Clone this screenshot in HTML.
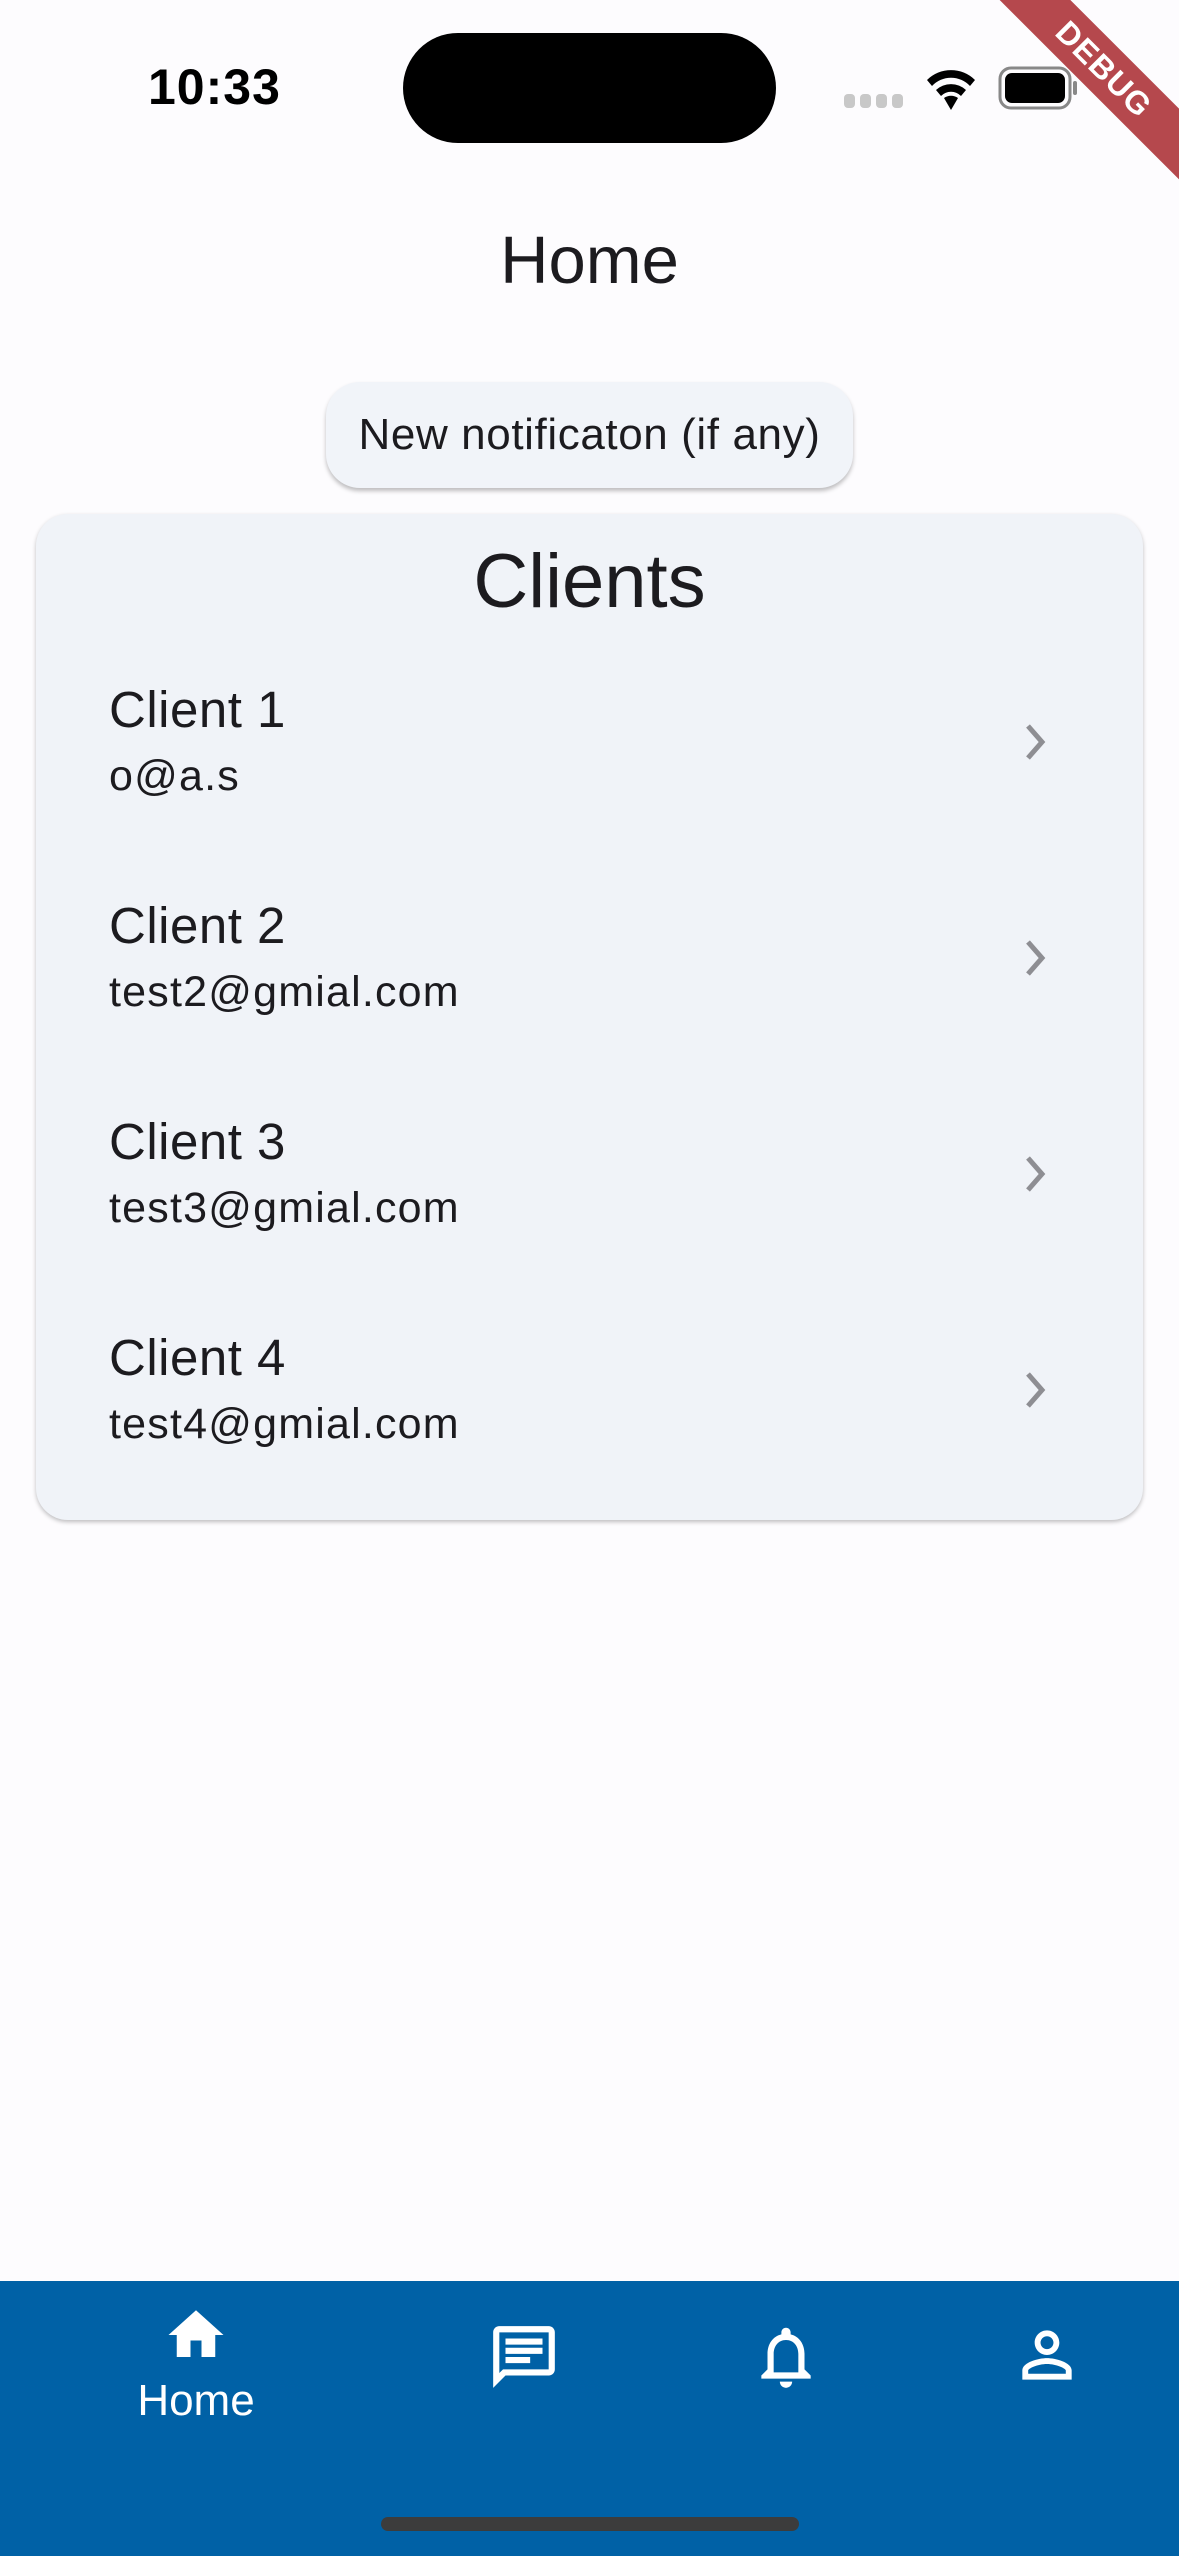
<!DOCTYPE html>
<html><head><meta charset="utf-8"><style>
html,body{margin:0;padding:0}
body{width:1179px;height:2556px;background:#fdfcfe;position:relative;overflow:hidden;font-family:"Liberation Sans",sans-serif;color:#1c1b1f}
.abs{position:absolute}
.time{left:148px;top:58px;font-size:50px;font-weight:bold;color:#000;letter-spacing:1px}
.island{left:403px;top:33px;width:373px;height:110px;background:#000;border-radius:55px}
.title{left:0;width:1179px;top:222px;text-align:center;font-size:67px}
.btn{left:326px;top:382px;width:527px;height:106px;background:#f1f4f9;border-radius:34px;box-shadow:0 3px 4px rgba(0,0,0,.25);text-align:center;line-height:106px;font-size:44px;letter-spacing:.6px}
.card{left:36px;top:514px;width:1107px;height:1006px;background:#f0f3f8;border-radius:32px;box-shadow:0 2px 4px rgba(0,0,0,.25)}
.clients{left:0;width:1179px;top:538px;text-align:center;font-size:76px}
.name{left:109px;font-size:51px;letter-spacing:.5px}
.mail{left:109px;font-size:43px;letter-spacing:1.2px}
.chev{left:1020px}
.nav{left:0;top:2281px;width:1179px;height:275px;background:#0061a6}
.ind{left:381px;top:2517px;width:418px;height:14px;border-radius:7px;background:#3c3c3c}
.debug{right:-80px;top:44px;width:310px;height:50px;background:#b5484d;transform:rotate(45deg);color:#fff;font-weight:bold;font-size:32px;text-align:center;line-height:50px;letter-spacing:1px}
</style></head><body>
<div class="abs time">10:33</div>
<div class="abs island"></div>
<svg class="abs" style="left:844px;top:94px" width="64" height="16"><g fill="#c8c8c8"><rect x="0" y="0" width="11" height="14" rx="4"/><rect x="16" y="0" width="11" height="14" rx="4"/><rect x="32" y="0" width="11" height="14" rx="4"/><rect x="48" y="0" width="11" height="14" rx="4"/></g></svg>
<svg class="abs" style="left:924px;top:66px" width="54" height="44" viewBox="0 0 54 44"><path d="M27 44 L20 32 A12 12 0 0 1 34 32 Z" fill="#000"/><path d="M12 24 A22 22 0 0 1 42 24 L37 30 A14 14 0 0 0 17 30 Z" fill="#000"/><path d="M3 14 A34 34 0 0 1 51 14 L46 20 A26 26 0 0 0 8 20 Z" fill="#000"/></svg>
<svg class="abs" style="left:998px;top:66px" width="82" height="44"><rect x="2" y="2" width="70" height="40" rx="11" fill="none" stroke="#888" stroke-width="3"/><rect x="7" y="7" width="60" height="30" rx="7" fill="#000"/><rect x="75" y="15" width="4" height="14" rx="2" fill="#888"/></svg>
<div class="abs debug">DEBUG</div>
<div class="abs title">Home</div>
<div class="abs btn">New notificaton (if any)</div>
<div class="abs card"></div>
<div class="abs clients">Clients</div>

<div class="abs name" style="top:680px">Client 1</div>
<div class="abs mail" style="top:752px">o@a.s</div>
<div class="abs name" style="top:896px">Client 2</div>
<div class="abs mail" style="top:968px">test2@gmial.com</div>
<div class="abs name" style="top:1112px">Client 3</div>
<div class="abs mail" style="top:1184px">test3@gmial.com</div>
<div class="abs name" style="top:1328px">Client 4</div>
<div class="abs mail" style="top:1400px">test4@gmial.com</div>

<svg class="abs chev" style="top:722px" width="30" height="40"><path d="M8 4 L22 20 L8 36" fill="none" stroke="#8e8e93" stroke-width="5"/></svg>
<svg class="abs chev" style="top:938px" width="30" height="40"><path d="M8 4 L22 20 L8 36" fill="none" stroke="#8e8e93" stroke-width="5"/></svg>
<svg class="abs chev" style="top:1154px" width="30" height="40"><path d="M8 4 L22 20 L8 36" fill="none" stroke="#8e8e93" stroke-width="5"/></svg>
<svg class="abs chev" style="top:1370px" width="30" height="40"><path d="M8 4 L22 20 L8 36" fill="none" stroke="#8e8e93" stroke-width="5"/></svg>

<div class="abs nav"></div>
<svg class="abs" style="left:160px;top:2302px" width="72" height="66" viewBox="0 0 24 24"><path d="M10 20v-6h4v6h5v-8h3L12 3 2 12h3v8z" fill="#fff"/></svg>
<div class="abs" style="left:96px;width:200px;top:2376px;text-align:center;color:#fff;font-size:44px">Home</div>
<svg class="abs" style="left:487px;top:2320px" width="74" height="74" viewBox="0 0 24 24"><path d="M20 2H4c-1.1 0-2 .9-2 2v18l4-4h14c1.1 0 2-.9 2-2V4c0-1.1-.9-2-2-2zm0 14H5.2L4 17.2V4h16v12zM6 12h8v2H6zm0-3h12v2H6zm0-3h12v2H6z" fill="#fff"/></svg>
<svg class="abs" style="left:749px;top:2320px" width="74" height="74" viewBox="0 0 24 24"><path d="M12 22c1.1 0 2-.9 2-2h-4c0 1.1.89 2 2 2zm6-6v-5c0-3.07-1.64-5.640-4.5-6.32V4c0-.83-.67-1.5-1.5-1.5s-1.5.67-1.5 1.5v.68C7.63 5.36 6 7.92 6 11v5l-2 2v1h16v-1l-2-2zm-2 1H8v-6c0-2.480 1.51-4.5 4-4.5s4 2.02 4 4.5v6z" fill="#fff"/></svg>
<svg class="abs" style="left:1010px;top:2318px" width="74" height="74" viewBox="0 0 24 24"><path d="M12 5.9c1.16 0 2.1.94 2.1 2.1s-.94 2.1-2.1 2.1S9.9 9.16 9.9 8s.94-2.1 2.1-2.1m0 9c2.97 0 6.1 1.46 6.1 2.1v1.1H5.9V17c0-.64 3.13-2.1 6.1-2.1M12 4C9.790 4 8 5.79 8 8s1.79 4 4 4 4-1.79 4-4-1.79-4-4-4zm0 9c-2.67 0-8 1.34-8 4v3h16v-3c0-2.66-5.33-4-8-4z" fill="#fff"/></svg>
<div class="abs ind"></div>
</body></html>
